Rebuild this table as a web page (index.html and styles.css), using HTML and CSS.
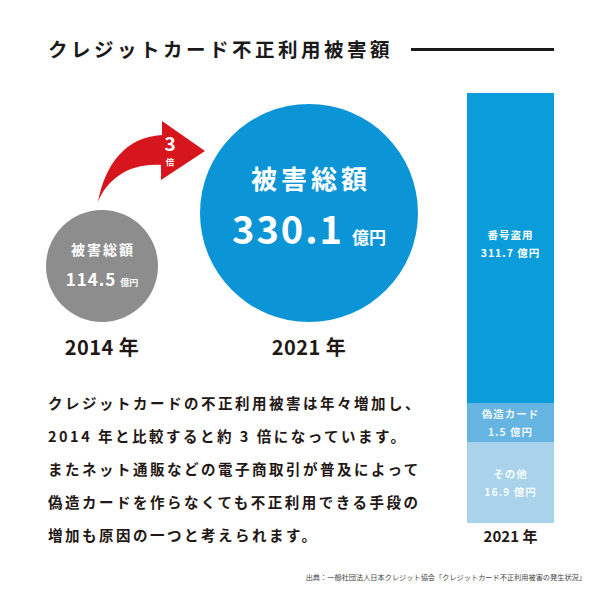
FILE: index.html
```html
<!DOCTYPE html>
<html lang="ja">
<head>
<meta charset="utf-8">
<title>クレジットカード不正利用被害額</title>
<link rel="stylesheet" href="styles.css">
</head>
<body>
<div class="page">
  <header class="title-row">
    <h1 class="title">クレジットカード不正利用被害額</h1>
    <span class="rule"></span>
  </header>
  <div class="main">
    <div class="left">
      <svg class="arrow" viewBox="90 110 120 95" width="120" height="95">
        <path d="M98 202 C105 165 125 137 162 135 L162 121 L205 151 L161 180 L161 165 C130 163 108 178 98 202 Z" fill="#d6151d"/>
        <text x="170" y="151" class="arrow-num">3</text>
        <text x="170" y="165" class="arrow-unit">倍</text>
      </svg>
      <div class="compare">
        <div class="col col-2014">
          <div class="circle small">
            <div class="c-label">被害総額</div>
            <div class="c-amount"><span class="num">114.5</span><span class="unit">億円</span></div>
          </div>
          <div class="year">2014 年</div>
        </div>
        <div class="col col-2021">
          <div class="circle big">
            <div class="c-label">被害総額</div>
            <div class="c-amount"><span class="num">330.1</span><span class="unit">億円</span></div>
          </div>
          <div class="year">2021 年</div>
        </div>
      </div>
      <p class="desc">クレジットカードの不正利用被害は年々増加し、<br>2014 年と比較すると約 3 倍になっています。<br>またネット通販などの電子商取引が普及によって<br>偽造カードを作らなくても不正利用できる手段の<br>増加も原因の一つと考えられます。</p>
    </div>
    <div class="bar-col">
      <div class="bar">
        <div class="seg seg-main"><span>番号盗用</span><span>311.7 億円</span></div>
        <div class="seg seg-fake"><span>偽造カード</span><span>1.5 億円</span></div>
        <div class="seg seg-other"><span>その他</span><span>16.9 億円</span></div>
      </div>
      <div class="bar-year">2021 年</div>
    </div>
  </div>
  <p class="source">出典：一般社団法人日本クレジット協会「クレジットカード不正利用被害の発生状況」</p>
</div>
</body>
</html>
```

FILE: styles.css
```css
* { box-sizing: border-box; }

body {
  margin: 0;
  background: #ffffff;
  font-family: "Noto Sans CJK JP", "Noto Sans", sans-serif;
  color: #231815;
}

.page {
  width: 600px;
  height: 600px;
  padding: 34px 46px 0 46px;
  overflow: hidden;
}

.title-row {
  display: flex;
  align-items: center;
  justify-content: space-between;
  height: 30px;
}

.title {
  margin: 0;
  padding-left: 2px;
  font-size: 19.5px;
  line-height: 30px;
  font-weight: 700;
  letter-spacing: 3.5px;
  color: #1a1a1a;
}

.rule {
  width: 143px;
  height: 3px;
  background: #1a1a1a;
}

.main {
  display: flex;
  margin-top: 29px;
}

.left {
  flex: 1;
  position: relative;
  padding-top: 11px;
}

.arrow {
  position: absolute;
  left: 44px;
  top: 17px;
  overflow: visible;
}

.arrow-num {
  font-family: "Noto Sans CJK JP", sans-serif;
  font-weight: 700;
  font-size: 19px;
  fill: #ffffff;
  text-anchor: middle;
}

.arrow-unit {
  font-family: "Noto Sans CJK JP", sans-serif;
  font-weight: 700;
  font-size: 8.5px;
  fill: #ffffff;
  text-anchor: middle;
}

.compare {
  display: flex;
  align-items: flex-end;
}

.col {
  display: flex;
  flex-direction: column;
  align-items: center;
}

.col-2014 { width: 112px; }

.col-2021 {
  width: 218px;
  margin-left: 42px;
}

.circle {
  border-radius: 50%;
  display: flex;
  flex-direction: column;
  align-items: center;
  justify-content: center;
  color: #ffffff;
  font-weight: 700;
}

.small {
  width: 112px;
  height: 112px;
  background: #8d8d8d;
}

.big {
  width: 218px;
  height: 218px;
  background: #0c95d6;
  padding-bottom: 6px;
}

.c-amount {
  display: flex;
  align-items: baseline;
  justify-content: center;
}

.small .c-label {
  font-size: 14px;
  line-height: 29px;
  letter-spacing: 2px;
  padding-left: 2px;
}

.small .c-amount { line-height: 29px; }

.small .num {
  font-size: 17px;
  letter-spacing: 1px;
}

.small .unit {
  font-size: 9px;
  margin-left: 4px;
}

.big .c-label {
  font-size: 26px;
  line-height: 44px;
  letter-spacing: 4px;
  padding-left: 4px;
}

.big .c-amount { line-height: 56px; }

.big .num {
  font-size: 38px;
  letter-spacing: 2px;
}

.big .unit {
  font-size: 17px;
  margin-left: 8px;
}

.year {
  margin-top: 13px;
  line-height: 24px;
  font-size: 20px;
  font-weight: 700;
  letter-spacing: 0.5px;
}

.desc {
  margin: 26.5px 0 0 0;
  padding-left: 2px;
  font-size: 14.5px;
  line-height: 33px;
  letter-spacing: 2.5px;
  font-weight: 700;
  color: #231815;
  white-space: nowrap;
}

.bar-col {
  width: 87px;
  display: flex;
  flex-direction: column;
}

.bar {
  height: 430px;
  display: flex;
  flex-direction: column;
}

.seg {
  display: flex;
  flex-direction: column;
  align-items: center;
  justify-content: center;
  color: #ffffff;
  font-size: 10.5px;
  font-weight: 700;
  letter-spacing: 1px;
  line-height: 17.5px;
}

.seg-main {
  height: 310px;
  background: #0a9dda;
  padding-bottom: 9px;
}

.seg-fake {
  height: 39px;
  background: #66b4e1;
  color: rgba(255, 255, 255, 0.92);
}

.seg-other {
  height: 81px;
  background: #a8d3eb;
  color: rgba(255, 255, 255, 0.95);
}

.bar-year {
  margin-top: 3px;
  line-height: 20px;
  font-size: 15px;
  font-weight: 700;
  text-align: center;
}

.source {
  margin: 20.5px -32px 0 0;
  text-align: right;
  font-size: 7.2px;
  line-height: 12px;
  color: #444444;
  white-space: nowrap;
}
```
